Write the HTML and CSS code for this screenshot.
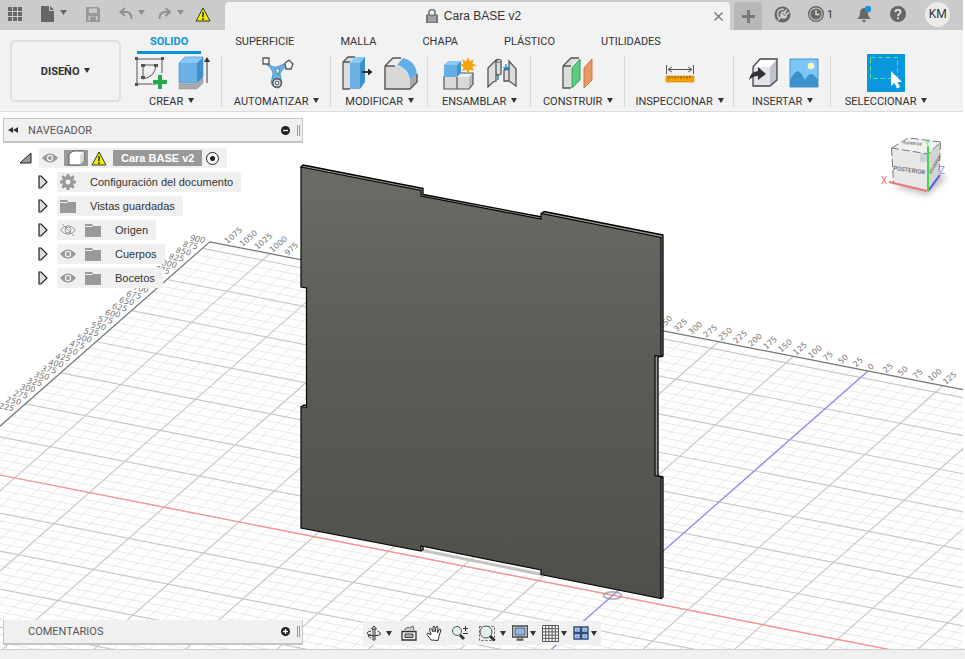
FILE: index.html
```html
<!DOCTYPE html>
<html lang="es">
<head>
<meta charset="utf-8">
<title>Cara BASE v2</title>
<link rel="stylesheet" href="styles.css">
</head>
<body>
<header class="topbar">
  <div class="quick">
    <button class="ib grid-btn" aria-label="Panel de datos"><svg width="14" height="14" viewBox="0 0 14 14" fill="#666"><path d="M0 0h4v4H0zM5 0h4v4H5zM10 0h4v4h-4zM0 5h4v4H0zM5 5h4v4H5zM10 5h4v4h-4zM0 10h4v4H0zM5 10h4v4H5zM10 10h4v4h-4z"/></svg></button>
    <button class="ib file-btn" aria-label="Archivo"><svg width="26" height="16" viewBox="0 0 26 16" fill="#666"><path d="M0 0h8v5h5v11H0zM9 0l4 4H9zM19 4h7L22.500 9z"/></svg></button>
    <button class="ib save-btn" aria-label="Guardar"><svg width="14" height="15" viewBox="0 0 14 15" fill="#999"><path fill-rule="evenodd" d="M0 0h12l2 2v13H0zM3 1.500V6h8V1.500zM2.500 9v4.500H4V9.500h6v4h1.500V9z"/><path d="M5 11h4v4H5z"/></svg></button>
    <button class="ib undo-btn" aria-label="Deshacer"><svg width="26" height="14" viewBox="0 0 26 14"><path d="M6 1L1.500 5 6 9M1.500 5h6q5 .5 5 7" fill="none" stroke="#909090" stroke-width="2"/><path d="M19 3h7l-3.500 5z" fill="#909090"/></svg></button>
    <button class="ib redo-btn" aria-label="Rehacer"><svg width="26" height="14" viewBox="0 0 26 14"><path d="M7.500 1L12 5 7.500 9M12 5H6.500q-5 .5-5 7" fill="none" stroke="#909090" stroke-width="2"/><path d="M19 3h7l-3.500 5z" fill="#909090"/></svg></button>
    <button class="ib" aria-label="Advertencia"><svg width="16" height="15" viewBox="0 0 16 15"><path d="M8 1l7 13H1z" fill="#f0ee00" stroke="#333" stroke-linejoin="round"/><path d="M8 5v5M8 11v2" stroke="#222" stroke-width="1.500"/></svg></button>
  </div>
  <div class="doc-tab">
    <div class="doc-title"><svg width="12" height="14" viewBox="0 0 12 14"><path d="M3 6V3.500a3 3 0 0 1 6 0V6" fill="none" stroke="#777" stroke-width="1.700"/><path d="M0 5.500h12V14H0z" fill="#777"/><path d="M2 8h8M2 10h8M2 12h8" stroke="#ddd" stroke-width=".8"/></svg><span>Cara BASE v2</span></div>
    <button class="ib close" aria-label="Cerrar"><svg width="9" height="9" viewBox="0 0 9 9"><path d="M.5.5l8 8M8.500.5l-8 8" stroke="#777" stroke-width="1.400"/></svg></button>
  </div>
  <div class="status">
    <button class="ib new-tab" aria-label="Nuevo"><svg width="13" height="13" viewBox="0 0 13 13"><path d="M6.500 0v13M0 6.500h13" stroke="#777" stroke-width="3"/></svg></button>
    <button class="ib" aria-label="Extensiones"><svg width="17" height="17" viewBox="0 0 17 17"><circle cx="8.500" cy="8.500" r="8" fill="#666"/><path d="M10 3.500Q4 2.500 3.500 8q0 3 2 4.500" fill="none" stroke="#ccc" stroke-width="1.500"/><path d="M7 12l-1-2 .5-3 2-2 1 1 2.500-3 1.200 1-2 3 .8.700 3-2.200.9 1.300-3 2.500.6 1-2 2.200-3 .3z" fill="#ccc"/><path d="M4 14l4-4" stroke="#ccc" stroke-width="1.600"/><path d="M8.500 7l3 3" stroke="#666" stroke-width="1"/></svg></button>
    <button class="ib jobs" aria-label="Estado de trabajos"><svg width="16" height="16" viewBox="0 0 16 16"><circle cx="8" cy="8" r="7.300" fill="none" stroke="#666" stroke-width="1.400"/><circle cx="8" cy="8" r="5.600" fill="#666"/><path d="M8 4v4.500h3.500" fill="none" stroke="#ddd" stroke-width="1.400"/></svg><span>1</span></button>
    <button class="ib bell" aria-label="Notificaciones"><svg width="17" height="18" viewBox="0 0 17 18"><path d="M7 3q-4 .5-4 5 0 4-3 6h14q-3-2-3-6 0-5-4-5zM5 15h4q0 2-2 2t-2-2z" fill="#666"/><circle cx="11" cy="4" r="3.200" fill="#1494dc"/></svg></button>
    <button class="ib" aria-label="Ayuda"><svg width="16" height="16" viewBox="0 0 16 16"><circle cx="8" cy="8" r="8" fill="#666"/><path d="M5.300 6.200Q5.500 3.800 8 3.800t2.600 2.200Q10.600 7.300 9 8.200 8 8.800 8 10M8 11.200v2" fill="none" stroke="#ddd" stroke-width="1.900"/></svg></button>
    <button class="avatar">KM</button>
  </div>
</header>

<section class="ribbon">
  <button class="workspace">DISEÑO <i class="caret"></i></button>
  <div class="ribbon-main">
    <nav class="tabs">
      <a class="on" href="#solido">SOLIDO</a><a href="#superficie">SUPERFICIE</a><a href="#malla">MALLA</a><a href="#chapa">CHAPA</a><a href="#plastico">PLÁSTICO</a><a href="#utilidades">UTILIDADES</a>
    </nav>
    <div class="groups">
      <div class="group"><div class="tools wide">
        <svg width="34" height="34" viewBox="0 0 34 34"><path d="M3 3h25v25H3zM9 9v14M9 9h13q-1 12-13 14" fill="none" stroke="#555"/><path d="M1 1h3v3H1zM27 1h3v3h-3zM1 27h3v3H1zM7 8h4v3H7zM20 8h4v3h-4zM7 20h4v3H7z" fill="#555"/><path d="M23 17h6v5h5v6h-5v6h-6v-6h-5v-6h5z" fill="#f2f2f2"/><path d="M24 19h4v5h5v4h-5v5h-4v-5h-5v-4h5z" fill="#23a94b"/></svg>
        <svg width="32" height="34" viewBox="0 0 32 34"><path d="M1 28h18l6-6v5l-6 6H1z" fill="#aaa" stroke="#888" stroke-width=".5"/><path d="M1 7l6-6h18l-6 6z" fill="#86c9fa"/><path d="M1 7h18v20H1z" fill="#6cb1e6"/><path d="M19 7l6-6v20l-6 6z" fill="#3e91cc"/><path d="M1 27V7l6-6h18v20l-6 6z" fill="none" stroke="#488fc6" stroke-width=".7"/><path d="M29 27V4" stroke="#333"/><path d="M29 1l3 5h-6z" fill="#333"/></svg>
      </div><button class="menu">CREAR <i class="caret"></i></button></div>
      <div class="group"><div class="tools">
        <svg width="34" height="34" viewBox="0 0 34 34"><path d="M6 5q6 7 10 6t10-4l2 3q-7 3-8 8l2 9q-1 5-5 5t-6-5l2-9q0-5-7-10z" fill="#6ab1e6" stroke="#397cae" stroke-width=".7"/><path d="M15 13h5l-2 6z" fill="#f2f2f2" stroke="#478bba"/><path d="M3 2h6v6H3z" fill="#f5f5f5" stroke="#555" stroke-width="1.300"/><path d="M25 7l4-3 4 4-2 5h-5z" fill="#f5f5f5" stroke="#555" stroke-width="1.300"/><circle cx="17" cy="27" r="4.300" fill="#ddd" stroke="#555" stroke-width="1.400"/><circle cx="17" cy="27" r="1.800" fill="#fff" stroke="#555"/></svg>
      </div><button class="menu">AUTOMATIZAR <i class="caret"></i></button></div>
      <div class="group"><div class="tools wide">
        <svg width="32" height="34" viewBox="0 0 32 34"><path d="M1 6l5-5h10v32H1z" fill="#ddd"/><path d="M8 33H1V6l5-5h7M1 6h7" fill="none" stroke="#555" stroke-width="1.300"/><path d="M8 7h10v26H8z" fill="#6bb1e5"/><path d="M8 7l5-6h10l-5 6z" fill="#86c9fa"/><path d="M18 7l5-6v25l-5 7z" fill="#3e91cc"/><path d="M20 16h7" stroke="#222" stroke-width="1.700"/><path d="M26 12.500l4.500 3.500-4.500 3.500z" fill="#222"/></svg>
        <svg width="34" height="34" viewBox="0 0 34 34"><path d="M1 10l8-8h7q16 2 17 18v6l-7 7H1z" fill="#eee"/><path d="M1 10h12q11 2 13 13v10H1z" fill="#d8d8d8"/><path d="M26 23l7-5v8l-7 7z" fill="#aaa"/><path d="M13 9l6-7q13 3 14 17l-7 4Q24 12 13 9z" fill="#62aee8"/><path d="M1 10l8-8h8M1 10v23h25l7-7v-8M1 10h10" fill="none" stroke="#555" stroke-width="1.400"/></svg>
      </div><button class="menu">MODIFICAR <i class="caret"></i></button></div>
      <div class="group"><div class="tools wide">
        <svg width="34" height="34" viewBox="0 0 34 34"><path d="M1 21h13v12H1zM14 21h12v12H14z" fill="#d9d9d9"/><path d="M14 21l5-4h11l-4 4z" fill="#eee"/><path d="M26 21l4-4v11l-4 5z" fill="#bbb"/><path d="M1 20v13h25l4-5V17H18M14 21v12" fill="none" stroke="#555" stroke-width="1.200"/><path d="M1 9l4-4h13l-4 4z" fill="#86c9fa"/><path d="M1 9h13v12H1z" fill="#66aee5"/><path d="M14 9l4-4v12l-4 4z" fill="#3e91cc"/><path d="M25 1l1.700 4.300 4.300-2-1.700 4.200 4 1.800-4 1.800 1.700 4.200-4.300-1.800L25 18l-1.700-4.500-4.300 1.800 1.700-4.200-4.200-1.800 4.200-1.800-1.700-4.200 4.300 2z" fill="#f6a20a"/></svg>
        <svg width="30" height="34" viewBox="0 0 30 34"><path d="M1 12l8-8v21l-3 1-5 5zM9 5q3-3 5 0v13q-3 2-5 0M29 30V13l-7-8v20zM22 25h-5V14q3-2 5 0" fill="#ddd" stroke="#555" stroke-width="1.300"/><ellipse cx="12" cy="5" rx="2.500" ry="1.300" fill="#fff" stroke="#555"/><path d="M11 19v5M19 8v6m-2.500-3l2.500 3 2.500-3" fill="none" stroke="#1686d0" stroke-width="1.400"/></svg>
      </div><button class="menu">ENSAMBLAR <i class="caret"></i></button></div>
      <div class="group"><div class="tools">
        <svg width="32" height="34" viewBox="0 0 32 34"><path d="M1 10l7-8h8l-7 8zM1 10h8v22H1z" fill="#ddd"/><path d="M9 32H1V10l8-8h8M1 10h8" fill="none" stroke="#555" stroke-width="1.300"/><path d="M10 12l8-9v21l-8 8z" fill="#5dcb80" stroke="#30a257"/><path d="M22 12l8-9v21l-8 8z" fill="#e89963" stroke="#c77a45"/></svg>
      </div><button class="menu">CONSTRUIR <i class="caret"></i></button></div>
      <div class="group"><div class="tools">
        <svg width="30" height="34" viewBox="0 0 30 34"><path d="M1.500 9v9M28.500 9v9M3 13.500h24M7 11l-4 2.500L7 16M23 11l4 2.500L23 16" fill="none" stroke="#555"/><path d="M1 20h28v6H1z" fill="#f4a000" stroke="#d38700" stroke-width=".6"/><path d="M4 20v3m3-3v2m3-2v3m3-3v2m3-2v3m3-3v2m3-2v3m3-3v2" stroke="#865b0b"/></svg>
      </div><button class="menu">INSPECCIONAR <i class="caret"></i></button></div>
      <div class="group"><div class="tools wide">
        <svg width="32" height="34" viewBox="0 0 32 34"><path d="M6 11l7-8h17v21l-7 6H6z" fill="#fff"/><path d="M6 11h17v19H6z" fill="#e3e3e9"/><path d="M23 11l7-8v21l-7 6z" fill="#bfc3d0"/><path d="M6 11l7-8h17v21l-7 6H6z" fill="none" stroke="#444" stroke-width="1.300"/><path d="M2 24q1-8 9-9v-4l8 7-8 6v-4q-5 0-9 4z" fill="#333"/></svg>
        <svg width="30" height="34" viewBox="0 0 30 34"><path d="M1 3h28v28H1z" fill="#7dc7f8" stroke="#4594cc"/><path d="M1 25q4-10 8-10 3 1 7 9 3-6 6-6 3 0 7 6v7H1z" fill="#3d91cc"/><circle cx="22" cy="10" r="3.300" fill="#fff5b8"/></svg>
      </div><button class="menu">INSERTAR <i class="caret"></i></button></div>
      <div class="group"><div class="tools">
        <svg width="38" height="38" viewBox="0 0 38 38"><path d="M0 0h38v38H0z" fill="#0896dc"/><path d="M3.500 3.500h27v21h-27z" fill="none" stroke="#5ae08b" stroke-dasharray="5 2.500"/><path d="M24 17v15l3.500-3 2.500 5.500 3-1.500-2.500-5H35z" fill="#fff"/></svg>
      </div><button class="menu">SELECCIONAR <i class="caret"></i></button></div>
    </div>
  </div>
</section>

<main class="canvas">
  <svg class="scene" viewBox="0 112 963 537" preserveAspectRatio="xMidYMid slice" aria-hidden="true">
    <defs>
      <linearGradient id="steel" x1="0" y1="0" x2="0" y2="1"><stop offset="0" stop-color="#6b6c66"/><stop offset=".45" stop-color="#5c5b56"/><stop offset="1" stop-color="#514f4a"/></linearGradient>
      <clipPath id="floor"><path d="M209.800 241.800L1100 416V900H-400V777z"/></clipPath>
    </defs>
    <g clip-path="url(#floor)" fill="none">
      <path id="minor" stroke="#e9e9e9"/>
      <path id="major" stroke="#c8c8c8" stroke-width="1.200"/>
      <path d="M0 475L963 664" stroke="#ff8d8d" stroke-width="1.200"/>
      <path d="M868 371L542 657.500" stroke="#8d8dff" stroke-width="1.200"/>
    </g>
    <path d="M-40 461.300L209.800 241.800 980 393" fill="none" stroke="#777" stroke-width="1.200"/>
    <g id="labels" class="ruler"></g>
    <path d="M423 550.500l119 24" stroke="#c3c3c3" stroke-width="3"/>
    <ellipse cx="612.500" cy="595.500" rx="9" ry="3.500" fill="none" stroke="#999" stroke-opacity=".7" stroke-width="2"/>
    <path d="M301 167l2-2 120 23.500v6l119 22.500v-4l2-1.500 119 23.500v121l-5 1v119l5 1V597l-2 1.500z" fill="#98988f" stroke="#000" stroke-width="1.300" stroke-linejoin="round"/>
    <path d="M301 167l120 23.500v5.500l120 23v-5.500l120 24v119l-6-1v120l6 1.500V598.500l-120-24v-4.500l-120-24v5l-120-23V406.500l5.500 1V288l-5.500-1z" fill="url(#steel)" stroke="#050505" stroke-width="1.200"/>
    <path d="M421 551l2-1.500v-3M301 407l3-2 2 .5" fill="none" stroke="#111" stroke-width="1.500"/>
  </svg>

  <svg class="viewcube" width="84" height="74" viewBox="874 130 84 74" role="img" aria-label="POSTERIOR">
    <defs><filter id="soft" x="-30%" y="-100%" width="160%" height="300%"><feGaussianBlur stdDeviation="3"/></filter></defs>
    <path d="M892 186l36 9 18-17-6-4z" fill="#bbb" filter="url(#soft)"/>
    <path d="M891.500 148l17-10 32 4-11 11.500z" fill="#f1f1f1"/><path d="M891.500 148l37 6v37l-35-8z" fill="#e8e8e8"/><path d="M928.500 154l12-12-1.500 32-10.500 17z" fill="#d4d4d4"/>
    <path d="M920 153h8v9h-8z" fill="#ccd3e0"/>
    <path d="M891.500 148l17-10 32 4-12 12zM891.500 148l2 35M940.500 142L939 174" fill="none" stroke="#777" stroke-dasharray="8 3"/>
    <g class="cube-text"><text x="893" y="170" transform="rotate(8 893 170)">POSTERIOR</text><text class="small" x="903" y="144" transform="rotate(5 903 144)">SUPERIOR</text><text class="small" x="931" y="174" transform="rotate(-60 931 174)">IZQUIERDA</text></g>
    <path d="M889 182l38 9" stroke="#ee7777" stroke-width="2"/><path d="M928 191l12-16" stroke="#5555e8" stroke-width="2"/><path d="M928 191v-45" stroke="#43d843" stroke-width="2"/>
    <g class="axis"><text x="881" y="184" fill="#f47777">X</text><text x="924.500" y="147" fill="#77e877">Y</text><text x="939" y="174" fill="#8888f5">Z</text></g>
  </svg>

  <div class="overlay">
    <section class="browser">
      <div class="panel"><button class="ib" aria-label="Contraer"><svg width="10" height="6" viewBox="0 0 10 6"><path d="M5 0v6L0 3zM10 0v6L5 3z" fill="#333"/></svg></button><h2>NAVEGADOR</h2><button class="ib" aria-label="Ocultar"><svg width="9" height="9" viewBox="0 0 9 9"><circle cx="4.500" cy="4.500" r="4.500" fill="#222"/><path d="M2 4.500h5" stroke="#fff" stroke-width="1.300"/></svg></button><span class="grip"></span></div>
      <ul class="tree">
        <li class="root"><button class="ib" aria-label="Contraer"><svg width="14" height="12" viewBox="0 0 14 12"><path d="M12 1v10H1z" fill="#999" stroke="#222"/></svg></button>
          <div class="node"><svg class="eye" width="16" height="12"><use href="#eye"/></svg><span class="comp"><svg width="18" height="16" viewBox="0 0 18 16"><path d="M2 4l4-3h11v10l-4 4H2z" fill="#fff" stroke="#555"/><path d="M13 5l4-4v10l-4 4z" fill="#ddd"/></svg></span><svg width="16" height="15" viewBox="0 0 16 15"><path d="M8 1l7 13H1z" fill="#f0ee00" stroke="#333" stroke-linejoin="round"/><path d="M8 5v5M8 11v2" stroke="#222" stroke-width="1.500"/></svg><label class="root-name" for="act">Cara BASE v2</label><input id="act" type="radio" checked></div></li>
        <li><button class="ib" aria-label="Expandir"><svg width="10" height="14"><use href="#arrow"/></svg></button><div class="node"><svg width="16" height="16" viewBox="0 0 16 16"><circle cx="8" cy="8" r="4.300" fill="none" stroke="#999" stroke-width="3.600"/><path d="M8 0v3M8 13v3M0 8h3M13 8h3M2.300 2.300l2.200 2.200M11.500 11.500l2.200 2.200M2.300 13.700l2.200-2.200M11.500 4.500l2.200-2.200" stroke="#999" stroke-width="3"/></svg><span class="name">Configuración del documento</span></div></li>
        <li><button class="ib" aria-label="Expandir"><svg width="10" height="14"><use href="#arrow"/></svg></button><div class="node"><svg width="16" height="13"><use href="#folder"/></svg><span class="name">Vistas guardadas</span></div></li>
        <li><button class="ib" aria-label="Expandir"><svg width="10" height="14"><use href="#arrow"/></svg></button><div class="node"><svg width="16" height="12" viewBox="0 0 16 12" fill="none" stroke="#999"><path d="M.5 6Q8-2.500 15.500 6 8 14.500.5 6zM2 0l12 12"/><circle cx="8" cy="6" r="3"/></svg><svg class="second" width="16" height="13"><use href="#folder"/></svg><span class="name">Origen</span></div></li>
        <li><button class="ib" aria-label="Expandir"><svg width="10" height="14"><use href="#arrow"/></svg></button><div class="node"><svg width="16" height="12"><use href="#eye"/></svg><svg class="second" width="16" height="13"><use href="#folder"/></svg><span class="name">Cuerpos</span></div></li>
        <li><button class="ib" aria-label="Expandir"><svg width="10" height="14"><use href="#arrow"/></svg></button><div class="node"><svg width="16" height="12"><use href="#eye"/></svg><svg class="second" width="16" height="13"><use href="#folder"/></svg><span class="name">Bocetos</span></div></li>
      </ul>
    </section>
    <div class="bottom">
      <div class="panel comments"><h2>COMENTARIOS</h2><button class="ib" aria-label="Añadir"><svg width="9" height="9" viewBox="0 0 9 9"><circle cx="4.500" cy="4.500" r="4.500" fill="#222"/><path d="M2 4.500h5M4.500 2v5" stroke="#fff" stroke-width="1.300"/></svg></button><span class="grip"></span></div>
      <div class="navbar">
        <button class="ib" aria-label="Orbitar"><svg width="16" height="16" viewBox="0 0 16 16" fill="none" stroke="#333"><path d="M7 4v11h2V4M5.500 4L8 1l2.500 3zM5 6Q0 7 1.500 9q3 3 12 1 2.500-2-2-4M5 9l-3 2 3 2.500"/></svg><i class="caret"></i></button>
        <button class="ib" aria-label="Mirar a"><svg width="16" height="16" viewBox="0 0 16 16"><path d="M1 6.500h14V15H1z" fill="#eee" stroke="#333" stroke-width="1.300"/><path d="M3 5l4-3 1 1 4-2 1 4" fill="#ccc" stroke="#666"/><path d="M4 9h8v3.500H4z" fill="#aaa" stroke="#444"/></svg></button>
        <button class="ib" aria-label="Encuadre"><svg width="16" height="17" viewBox="0 0 16 17"><path d="M5 15Q3 12 1 9.500q0-2 2-1l2 1.500L3.500 4q1-2 2 0L7 7V2q1-2 2 0v5l1-5q1.500-1.500 2 0L11.500 8 13 4.500q1.500-1 2 .5L13 11l-1 4.500z" fill="#fff" stroke="#333"/></svg></button>
        <button class="ib" aria-label="Zoom"><svg width="18" height="16" viewBox="0 0 18 16"><circle cx="6" cy="6" r="4.500" fill="#dff0f0" stroke="#555"/><path d="M9 10l4 4" stroke="#333" stroke-width="3"/><path d="M14.500 1v5M12 3.500h5M12 8.500h5" stroke="#333"/></svg></button>
        <button class="ib" aria-label="Ajustar"><svg width="18" height="17" viewBox="0 0 18 17"><path d="M1.500 1.500h15v14h-15z" fill="none" stroke="#555" stroke-dasharray="2 2"/><circle cx="8" cy="7" r="6" fill="#dfefed" stroke="#555"/><path d="M12 11l4.500 4.500" stroke="#333" stroke-width="3"/></svg><i class="caret"></i></button>
        <button class="ib" aria-label="Visualización"><svg width="16" height="16" viewBox="0 0 16 16"><path d="M.7 1h14.600v11H.7z" fill="#eee" stroke="#444" stroke-width="1.300"/><path d="M3 3h10v7H3z" fill="#8fb7e8" stroke="#557"/><path d="M6 12h4v3H6zM4 15h8" fill="#aaa" stroke="#555"/></svg><i class="caret"></i></button>
        <button class="ib" aria-label="Rejilla"><svg width="17" height="17" viewBox="0 0 17 17"><path d="M.5.5h16v16H.5z" fill="#fff"/><path d="M.5.5h16v16H.5zM3.700.5v16M6.900.5v16M10.100.5v16M13.300.5v16M.5 3.700h16M.5 6.900h16M.5 10.100h16M.5 13.300h16" fill="none" stroke="#555"/></svg><i class="caret"></i></button>
        <button class="ib" aria-label="Ventanas"><svg width="16" height="14" viewBox="0 0 16 14"><path d="M1 1h6.500v5.500H1zM8.500 1H15v5.500H8.500zM1 7.500h6.500V13H1zM8.500 7.500H15V13H8.500z" fill="#a9c8ee" stroke="#334b75" stroke-width="1.400"/><path d="M3 4h2.500M10.500 4H13M3 10.500h2.500M10.500 10.500H13" stroke="#668bbf"/></svg><i class="caret"></i></button>
      </div>
    </div>
  </div>
</main>
<footer class="timeline"></footer>

<svg class="symbols" width="0" height="0" aria-hidden="true">
  <symbol id="eye" viewBox="0 0 16 12"><path d="M0 6Q8-3 16 6 8 15 0 6z" fill="#999"/><circle cx="8" cy="6" r="3.200" fill="#eee"/><circle cx="8" cy="6" r="1.900" fill="#999"/></symbol>
  <symbol id="folder" viewBox="0 0 16 13"><path d="M0 0h7l1.500 2H16v11H0z" fill="#999"/><path d="M0 2.500h7.500l1-1" fill="none" stroke="#f0f0f0"/></symbol>
  <symbol id="arrow" viewBox="0 0 10 14"><path d="M1 1h2l6 6-6 6H1z" fill="#ddd" stroke="#222" stroke-width="1.200"/></symbol>
</svg>
<script src="scene.js"></script>
</body>
</html>
```
FILE: styles.css
```css
* { box-sizing: border-box; }
body { margin: 0; height: 100vh; display: flex; flex-direction: column; overflow: hidden; background: #fff; color: #333; font: 11px Roboto, "Liberation Sans", sans-serif; }
button { font: inherit; color: inherit; border: 0; background: none; padding: 0; }
svg { display: block; flex: none; }
h2, ul { margin: 0; padding: 0; font-weight: 400; font-size: 11px; }
.ib { display: flex; align-items: center; }
.caret { display: inline-block; border: 3px solid transparent; border-top: 5px solid #333; border-bottom: 0; }

.topbar { display: flex; height: 30px; margin-right: 2px; background: #cbcbcb; }
.quick { width: 225px; display: flex; align-items: center; padding: 0 0 2px 8px; }
.file-btn { margin-left: 19px; }
.save-btn { margin-left: 19px; }
.undo-btn { margin-left: 19px; }
.redo-btn { margin: 0 11px 0 13px; }
.doc-tab { flex: 1; margin-top: 2px; background: #f2f2f2; border-radius: 4px 4px 0 0; display: flex; align-items: center; padding-right: 7px; }
.doc-title { flex: 1; display: flex; align-items: center; justify-content: center; gap: 6px; font: 12px "Liberation Sans", sans-serif; padding-left: 8px; }
.status { display: flex; align-items: center; gap: 17px; width: 233px; padding: 0 0 2px 4px; }
.new-tab { width: 28px; height: 28px; margin: 2px -5px -2px 0; justify-content: center; background: #b7b7b7; border-radius: 4px 4px 0 0; }
.jobs { gap: 3px; }
.bell { margin-left: 7px; margin-right: -1px; }
.avatar { width: 25px; height: 25px; border-radius: 50%; background: #ebebeb; font-size: 12px; margin-left: 2px; }

.ribbon { display: flex; height: 82px; margin-right: 2px; background: #f2f2f2; border-bottom: 1px solid #dcdcdc; }
.workspace { width: 111px; height: 62px; margin: 10px 0 0 10px; border: 2px solid #dedede; border-radius: 5px; font-weight: 700; }
.workspace .caret, .menu .caret { margin: 0 0 2px 2px; }
.ribbon-main { flex: 1; }
.tabs { display: flex; gap: 22px; padding-left: 16px; }
.tabs a { height: 24px; padding: 0 12px; line-height: 23px; color: #333; text-decoration: none; }
.tabs .on { padding: 0 13px; color: #0a94d6; font-weight: 700; border-bottom: 3px solid #0a94d6; }
.groups { display: grid; grid-template-columns: 101px 109px 97px 103px 94px 109px 97px 110px; height: 57px; }
.group { display: flex; flex-direction: column; align-items: center; position: relative; }
.group + .group::before { content: ""; position: absolute; left: -1px; top: 2px; height: 51px; border-left: 1px solid #d9d9d9; }
.tools { height: 38px; display: flex; align-items: center; }
.wide { gap: 10px; }
.menu { line-height: 20px; white-space: nowrap; }

.canvas { flex: 1; min-height: 0; position: relative; overflow: hidden; margin-right: 2px; }
.scene { position: absolute; inset: 0; width: 100%; height: 100%; }
.ruler { font: 8px "DejaVu Sans", sans-serif; fill: #777; }
.ruler .side { font-style: oblique; text-anchor: end; }
.viewcube { position: absolute; right: 5px; top: 18px; }
.cube-text { font: 500 6px Roboto, sans-serif; fill: #666; }
.cube-text .small { font-size: 4px; }
.axis { font: 10px Roboto, sans-serif; }
.overlay { position: relative; height: 100%; display: flex; flex-direction: column; justify-content: space-between; padding: 6px 3px 4px; }
.browser { width: 300px; }
.panel { display: flex; align-items: center; width: 300px; height: 25px; padding: 0 2px 0 4px; background: #f0f0f0; border: 1px solid #c4c4c4; border-width: 1px 1px 2px; }
.panel h2 { flex: 1; margin-left: 10px; color: #555; }
.grip { width: 3px; height: 11px; border: 1px solid #999; border-width: 0 1px; margin-left: 7px; }
.comments { border-top: 0; padding-left: 14px; }
.tree { list-style: none; font: 11px "Liberation Sans", sans-serif; padding-top: 3px; }
.tree li { display: flex; align-items: center; height: 24px; padding-left: 35px; gap: 9px; }
.tree .root { padding-left: 16px; gap: 6px; }
.node { display: flex; align-items: center; height: 20px; background: #f0f0f0; padding: 0 8px 0 3px; }
.second { margin-left: 9px; }
.name { margin-left: 14px; white-space: nowrap; }
.comp { background: #999; height: 16px; padding: 0 3px; margin: 0 3px 0 6px; }
.root-name { background: #999; color: #fff; font-weight: 700; height: 16px; line-height: 16px; padding: 0 8px; margin: 0 4px 0 6px; white-space: nowrap; }
.root input { appearance: none; width: 13px; height: 13px; margin: 0; border: 1px solid #222; border-radius: 50%; background: radial-gradient(circle, #222 2px, #fff 3px); }
.bottom { display: flex; align-items: flex-end; gap: 60px; }
.navbar { display: flex; align-items: center; gap: 9px; height: 24px; padding: 0 4px 0 3px; background: #f0f0f0; }
.navbar .ib { gap: 4px; }
.navbar .ib:nth-child(n+6) { gap: 2px; margin-left: -3px; }
.timeline { height: 10px; background: #f0f0f0; border-top: 1px solid #ccc; }
.symbols { position: absolute; }
```
FILE: scene.js
```js
// Floor grid: one unit is 25 mm along each axis, projected orthographically.
const origin = [613, 595.3];
const ux = 14.96, uy = 2.936;
const vx = 7.08, vy = -6.22;
const at = (u, v) => [origin[0] + u * ux + v * vx, origin[1] + u * uy + v * vy];

const paths = { minor: "", major: "" };
const line = (a, b, major) => {
  paths[major ? "major" : "minor"] += `M${a[0]} ${a[1]}L${b[0]} ${b[1]}`;
};
for (let u = -44; u <= 44; u++) line(at(u, 36), at(u, -44), u % 5 === 0);
for (let v = 36; v >= -44; v--) line(at(-44, v), at(44, v), v % 5 === 0);
document.getElementById("minor").setAttribute("d", paths.minor);
document.getElementById("major").setAttribute("d", paths.major);

const labels = document.getElementById("labels");
const addLabel = (x, y, angle, value, cls) => {
  const t = document.createElementNS("http://www.w3.org/2000/svg", "text");
  t.setAttribute("x", x);
  t.setAttribute("y", y);
  t.setAttribute("transform", `rotate(${angle} ${x} ${y})`);
  if (cls) t.setAttribute("class", cls);
  t.textContent = value;
  labels.append(t);
};
for (let u = -43; u <= 5; u++) {
  // The plate hides the labels between these two positions.
  if (u > -39 && u < -14) continue;
  const [x, y] = at(u, 36);
  addLabel(x + 3, y - 1, -41, Math.abs(u) * 25);
}
for (let v = 36; v >= 9; v--) {
  const [x, y] = at(-44, v);
  addLabel(x - 5, y + 1, 11, v * 25, "side");
}
```
